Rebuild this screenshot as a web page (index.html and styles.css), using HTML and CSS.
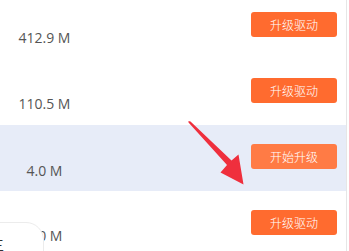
FILE: index.html
```html
<!DOCTYPE html>
<html lang="zh-CN">
<head>
<meta charset="utf-8">
<link rel="stylesheet" href="styles.css">
</head>
<body>
<div class="panel">
  <div class="list">
    <div class="row">
      <div class="size">412.9 M</div>
      <button class="btn">升级驱动</button>
    </div>
    <div class="row">
      <div class="size">110.5 M</div>
      <button class="btn">升级驱动</button>
    </div>
    <div class="row active">
      <div class="size">4.0 M</div>
      <button class="btn">开始升级</button>
    </div>
    <div class="row">
      <div class="size">4.0 M</div>
      <button class="btn">升级驱动</button>
    </div>
  </div>
  <div class="float-tab"><span>三</span></div>
  <svg class="arrow" width="349" height="251" viewBox="0 0 349 251">
    <polygon points="188.5,121 190.5,121.5 231.5,160.5 238.5,154.5 243.5,184.5 220.5,172.5 227,165 188.5,122.5" fill="#ef2f3d"/>
  </svg>
</div>
</body>
</html>
```

FILE: styles.css
```css
html, body {
  margin: 0;
  padding: 0;
  background: #fff;
  overflow: hidden;
}
body {
  width: 349px;
  height: 251px;
  font-family: "Open Sans", "Noto Sans CJK SC", sans-serif;
}
.panel {
  position: relative;
  width: 349px;
  height: 251px;
  overflow: hidden;
}
.list {
  width: 346px;
  border-right: 1px solid #e6e6e6;
  margin-top: -7px;
  height: 264px;
}
.row {
  display: flex;
  justify-content: space-between;
  align-items: flex-start;
  height: 66px;
  padding-right: 9px;
}
.row.active {
  background: #e7ecf8;
}
.size {
  width: 89px;
  text-align: center;
  font-size: 14px;
  line-height: 20px;
  color: #555;
  padding-top: 35px;
}
.row.active .size {
  padding-top: 36px;
}
.btn {
  margin-top: 19px;
  width: 86px;
  height: 25px;
  border: none;
  border-radius: 3px;
  background: #ff6b2f;
  color: #fff;
  font-family: "Noto Sans CJK SC", sans-serif;
  font-weight: 300;
  font-size: 12px;
  line-height: 25px;
  padding: 0;
}
.row.active .btn {
  background: #ff7b45;
}
.float-tab {
  position: absolute;
  left: -28px;
  top: 222px;
  width: 72px;
  height: 50px;
  background: #fff;
  border: 1px solid #ececec;
  border-radius: 18px;
  font-family: "Noto Sans CJK SC", sans-serif;
  font-size: 13px;
  color: #333;
  box-sizing: border-box;
}
.float-tab span {
  position: absolute;
  left: 18px;
  top: 12px;
}
.arrow {
  position: absolute;
  left: 0;
  top: 0;
  pointer-events: none;
}
```
